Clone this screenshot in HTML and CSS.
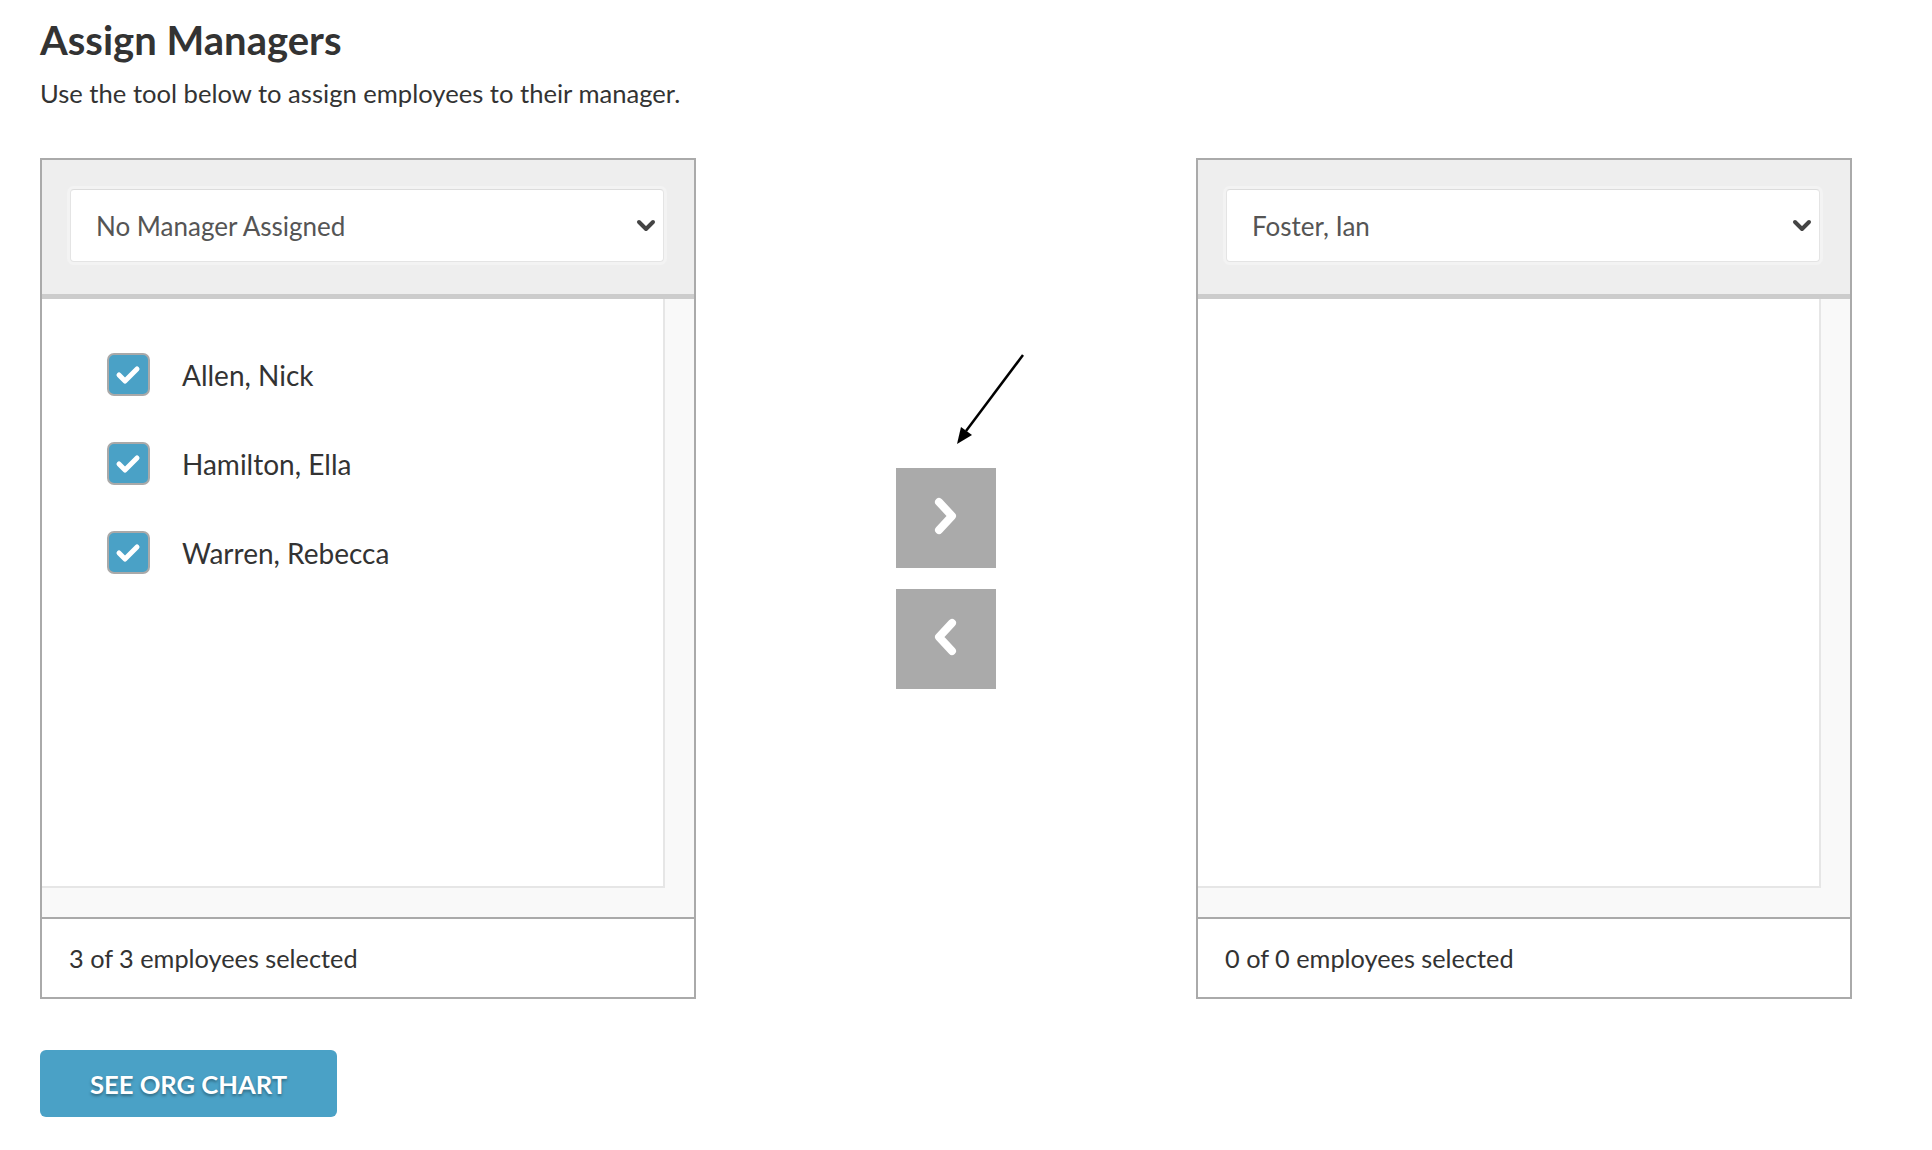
FILE: index.html
```html
<!DOCTYPE html>
<html lang="en">
<head>
    <meta charset="UTF-8">
    <meta name="viewport" content="width=device-width, initial-scale=1.0">
    <title>Assign Managers</title>
    <link rel="stylesheet" href="styles.css">
</head>
<body>
    <main class="page">
        <h1 class="title">Assign Managers</h1>
        <p class="intro">Use the tool below to assign employees to their manager.</p>

        <div class="assigner">
            <!-- source list -->
            <section class="panel">
                <div class="panel-head">
                    <div class="select">
                        <span>No Manager Assigned</span>
                        <svg class="select-caret" width="20" height="14" viewBox="0 0 20 14"><path d="M3 3 L10 10 L17 3" fill="none" stroke="#444" stroke-width="4" stroke-linecap="round" stroke-linejoin="round"/></svg>
                    </div>
                </div>
                <div class="panel-body">
                    <div class="list-view">
                        <ul class="employee-list">
                            <li class="employee">
                                <span class="checkbox"><svg width="43" height="43" viewBox="0 0 43 43"><path d="M12 22 L18 28 L30 16" fill="none" stroke="#fff" stroke-width="5" stroke-linecap="round" stroke-linejoin="round"/></svg></span>
                                Allen, Nick
                            </li>
                            <li class="employee">
                                <span class="checkbox"><svg width="43" height="43" viewBox="0 0 43 43"><path d="M12 22 L18 28 L30 16" fill="none" stroke="#fff" stroke-width="5" stroke-linecap="round" stroke-linejoin="round"/></svg></span>
                                Hamilton, Ella
                            </li>
                            <li class="employee">
                                <span class="checkbox"><svg width="43" height="43" viewBox="0 0 43 43"><path d="M12 22 L18 28 L30 16" fill="none" stroke="#fff" stroke-width="5" stroke-linecap="round" stroke-linejoin="round"/></svg></span>
                                Warren, Rebecca
                            </li>
                        </ul>
                    </div>
                </div>
                <div class="panel-foot">3 of 3 employees selected</div>
            </section>

            <!-- move buttons -->
            <div class="mover">
                <svg class="pointer" width="90" height="110" viewBox="0 0 90 110">
                    <line x1="77" y1="10" x2="20" y2="86" stroke="#000" stroke-width="2.5"/>
                    <polygon points="11,99 26,90 15,82" fill="#000"/>
                </svg>
                <button class="move-button" aria-label="Move right">
                    <svg width="100" height="100" viewBox="0 0 100 100"><path d="M43 34 L56 48 L43 62" fill="none" stroke="#fff" stroke-width="8" stroke-linecap="round" stroke-linejoin="round"/></svg>
                </button>
                <button class="move-button" aria-label="Move left">
                    <svg width="100" height="100" viewBox="0 0 100 100"><path d="M56 34 L43 48 L56 62" fill="none" stroke="#fff" stroke-width="8" stroke-linecap="round" stroke-linejoin="round"/></svg>
                </button>
            </div>

            <!-- target list -->
            <section class="panel">
                <div class="panel-head">
                    <div class="select">
                        <span>Foster, Ian</span>
                        <svg class="select-caret" width="20" height="14" viewBox="0 0 20 14"><path d="M3 3 L10 10 L17 3" fill="none" stroke="#444" stroke-width="4" stroke-linecap="round" stroke-linejoin="round"/></svg>
                    </div>
                </div>
                <div class="panel-body">
                    <div class="list-view">
                        <ul class="employee-list"></ul>
                    </div>
                </div>
                <div class="panel-foot">0 of 0 employees selected</div>
            </section>
        </div>

        <button class="org-button">See Org Chart</button>
    </main>
</body>
</html>
```

FILE: styles.css
```css
/* Basic Reset */
* {
    margin: 0;
    padding: 0;
    box-sizing: border-box;
}

:root {
    --text-color: #333;
    --muted-text: #555;
    --panel-border: #aaa;
    --head-bg: #eeeeee;
    --track-bg: #f9f9f9;
    --brand-blue: #4aa1c6;
    --move-bg: #aaaaaa;
}

body {
    font-family: 'Lato', 'Liberation Sans', sans-serif;
    color: var(--text-color);
    background: #fff;
}

.page {
    padding: 16px 40px 0;
}

.title {
    font-size: 40px;
    font-weight: 700;
    line-height: 48px;
}

.intro {
    font-size: 25.6px;
    line-height: 29px;
    margin-top: 15px;
}

.assigner {
    display: grid;
    grid-template-columns: 656px 500px 656px;
    margin-top: 50px;
}

/* Panels */
.panel {
    display: flex;
    flex-direction: column;
    height: 841px;
    border: 2px solid var(--panel-border);
}

.panel-head {
    background: var(--head-bg);
    padding: 29px 30px 32px 28px;
    border-bottom: 5px solid #ccc;
}

.select {
    display: flex;
    align-items: center;
    justify-content: space-between;
    height: 73px;
    padding: 0 7px 0 25px;
    background: #fff;
    border: 1px solid #e4e4e4;
    border-top-color: #dcdcdc;
    border-radius: 4px;
    box-shadow: 0 0 0 3px #f3f3f3;
    font-size: 26px;
    color: var(--muted-text);
}

.panel-body {
    flex: 1;
    display: flex;
    background: var(--track-bg);
    padding: 0 29px 29px 0;
}

.list-view {
    flex: 1;
    background: #fff;
    border-right: 2px solid #e6e6e6;
    border-bottom: 2px solid #e6e6e6;
}

.employee-list {
    list-style: none;
    padding: 54px 0 0 65px;
}

.employee {
    display: flex;
    align-items: center;
    gap: 32px;
    height: 43px;
    margin-bottom: 46px;
    font-size: 28px;
}

.checkbox {
    display: block;
    width: 43px;
    height: 43px;
    background: var(--brand-blue);
    border: 2px solid #a9a9a9;
    border-radius: 7px;
}

.checkbox svg {
    display: block;
    margin: -2px;
}

.panel-foot {
    height: 80px;
    display: flex;
    align-items: center;
    padding-left: 27px;
    border-top: 2px solid var(--panel-border);
    font-size: 25.3px;
}

/* Move buttons */
.mover {
    position: relative;
    display: flex;
    flex-direction: column;
    align-items: center;
    justify-content: center;
    gap: 21px;
}

.pointer {
    position: absolute;
    left: 250px;
    top: 187px;
}

.move-button {
    width: 100px;
    height: 100px;
    border: none;
    background: var(--move-bg);
    cursor: pointer;
}

.move-button svg {
    display: block;
}

/* Footer action */
.org-button {
    display: block;
    margin-top: 51px;
    width: 297px;
    height: 67px;
    border: none;
    border-radius: 6px;
    background: var(--brand-blue);
    color: #fff;
    font-family: 'Lato', 'Liberation Sans', sans-serif;
    font-size: 25.6px;
    font-weight: 700;
    text-transform: uppercase;
    text-shadow: 0 2px 3px rgba(0, 0, 0, 0.35);
    cursor: pointer;
}
```
